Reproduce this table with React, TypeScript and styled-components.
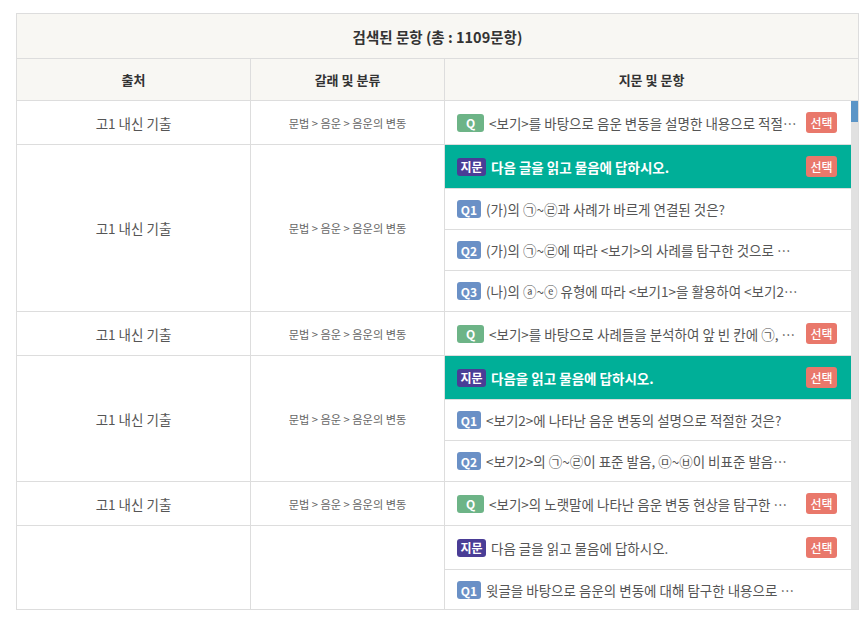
import styled, { createGlobalStyle } from 'styled-components';

type Kind = 'q' | 'sub' | 'passage';

interface Item {
    kind: Kind;
    label: string;
    text: string;
    pick?: boolean;
    active?: boolean;
}

interface Group {
    source: string;
    category: string;
    items: Item[];
}

const GlobalStyle = createGlobalStyle`
    html, body {
        margin: 0;
        background: #ffffff;
    }
    body {
        font-family: 'Noto Sans CJK KR', 'Noto Sans', sans-serif;
        color: #555555;
    }
`;

const Wrapper = styled.div`
    padding: 13px 9px 0 16px;
`;

const Board = styled.div`
    width: 843px;
    box-sizing: border-box;
    border: 1px solid #dddddd;
`;

const Title = styled.div`
    height: 44px;
    display: flex;
    align-items: center;
    justify-content: center;
    background: #f8f7f3;
    border-bottom: 1px solid #dddddd;
    font-size: 14.5px;
    font-weight: 700;
    color: #333333;
`;

const HeadRow = styled.div`
    display: grid;
    grid-template-columns: 234px 194px 1fr;
    height: 42px;
    background: #f8f7f3;
    border-bottom: 1px solid #dddddd;
    box-sizing: border-box;
`;

const HeadCell = styled.div`
    display: flex;
    align-items: center;
    justify-content: center;
    font-size: 13px;
    font-weight: 700;
    color: #333333;
    border-right: 1px solid #dddddd;
    &:last-child {
        border-right: none;
    }
`;

const Body = styled.div`
    display: flex;
    height: 508px;
`;

const Viewport = styled.div`
    flex: 1;
    min-width: 0;
    overflow: hidden;
`;

const ScrollTrack = styled.div`
    width: 7px;
    flex-shrink: 0;
    background: #e1e1e1;
`;

const ScrollThumb = styled.div`
    height: 21px;
    background: #5b95c7;
`;

const GroupRow = styled.div`
    display: grid;
    grid-template-columns: 234px 194px 1fr;
    border-bottom: 1px solid #dddddd;
`;

const SourceCell = styled.div`
    display: flex;
    align-items: center;
    justify-content: center;
    border-right: 1px solid #dddddd;
    font-size: 13.5px;
    color: #555555;
`;

const CategoryCell = styled(SourceCell)`
    font-size: 11.2px;
    color: #666666;
`;

const ItemList = styled.div`
    display: flex;
    flex-direction: column;
    min-width: 0;
`;

const ItemRow = styled.div<{ $active?: boolean; $pick?: boolean }>`
    display: grid;
    grid-template-columns: auto 1fr 31px;
    align-items: center;
    column-gap: 5px;
    height: ${(p) => (p.$pick ? '43px' : '40px')};
    padding: 0 14px 0 12px;
    background: ${(p) => (p.$active ? '#00af98' : '#ffffff')};
    border-bottom: 1px solid #dddddd;
    &:last-child {
        border-bottom: none;
    }
`;

const badgeColors: Record<Kind, string> = {
    q: '#6db487',
    sub: '#6a90c6',
    passage: '#4a3d96',
};

const badgeWidths: Record<Kind, string> = {
    q: '27px',
    sub: '24px',
    passage: '29px',
};

const Badge = styled.span<{ $kind: Kind }>`
    display: inline-flex;
    align-items: center;
    justify-content: center;
    width: ${(p) => badgeWidths[p.$kind]};
    height: 18px;
    border-radius: 3px;
    background: ${(p) => badgeColors[p.$kind]};
    color: #ffffff;
    font-size: 12px;
    font-weight: 700;
`;

const ItemText = styled.span<{ $active?: boolean }>`
    min-width: 0;
    margin-right: 3px;
    overflow: hidden;
    white-space: nowrap;
    text-overflow: ellipsis;
    font-size: 13.5px;
    font-weight: ${(p) => (p.$active ? 700 : 400)};
    color: ${(p) => (p.$active ? '#ffffff' : '#555555')};
`;

const PickButton = styled.button`
    width: 31px;
    height: 21px;
    padding: 0;
    border: none;
    border-radius: 3px;
    background: #e9786b;
    color: #ffffff;
    font-family: inherit;
    font-size: 12px;
    font-weight: 500;
    cursor: pointer;
`;

const source = '고1 내신 기출';
const category = '문법 > 음운 > 음운의 변동';

const groups: Group[] = [
    {
        source,
        category,
        items: [{ kind: 'q', label: 'Q', text: '<보기>를 바탕으로 음운 변동을 설명한 내용으로 적절하지 않은 것은?', pick: true }],
    },
    {
        source,
        category,
        items: [
            { kind: 'passage', label: '지문', text: '다음 글을 읽고 물음에 답하시오.', pick: true, active: true },
            { kind: 'sub', label: 'Q1', text: '(가)의 ㉠~㉣과 사례가 바르게 연결된 것은?' },
            { kind: 'sub', label: 'Q2', text: '(가)의 ㉠~㉣에 따라 <보기>의 사례를 탐구한 것으로 적절하지 않은 것은?' },
            { kind: 'sub', label: 'Q3', text: '(나)의 ⓐ~ⓔ 유형에 따라 <보기1>을 활용하여 <보기2>를 분석한 내용으로 적절한 것은?' },
        ],
    },
    {
        source,
        category,
        items: [{ kind: 'q', label: 'Q', text: '<보기>를 바탕으로 사례들을 분석하여 앞 빈 칸에 ㉠, ㉡을 채울 때 적절한 것은?', pick: true }],
    },
    {
        source,
        category,
        items: [
            { kind: 'passage', label: '지문', text: '다음을 읽고 물음에 답하시오.', pick: true, active: true },
            { kind: 'sub', label: 'Q1', text: '<보기2>에 나타난 음운 변동의 설명으로 적절한 것은?' },
            { kind: 'sub', label: 'Q2', text: '<보기2>의 ㉠~㉣이 표준 발음, ㉤~㉥이 비표준 발음인 이유를 설명한 것으로 적절한 것은?' },
        ],
    },
    {
        source,
        category,
        items: [{ kind: 'q', label: 'Q', text: '<보기>의 노랫말에 나타난 음운 변동 현상을 탐구한 내용으로 적절한 것은?', pick: true }],
    },
    {
        source,
        category,
        items: [
            { kind: 'passage', label: '지문', text: '다음 글을 읽고 물음에 답하시오.', pick: true },
            { kind: 'sub', label: 'Q1', text: '윗글을 바탕으로 음운의 변동에 대해 탐구한 내용으로 적절하지 않은 것은?' },
            { kind: 'sub', label: 'Q2', text: '윗글을 참고할 때, <보기>의 ㉠~㉤에 대한 설명으로 적절한 것은?' },
            { kind: 'sub', label: 'Q3', text: '<보기>의 자료를 분석한 내용으로 가장 적절한 것은?' },
            { kind: 'sub', label: 'Q4', text: '다음 중 음운 변동의 결과 음운의 개수가 줄어든 것은?' },
        ],
    },
];

const App = () => (
    <Wrapper>
        <GlobalStyle />
        <Board>
            <Title>검색된 문항 (총 : 1109문항)</Title>
            <HeadRow>
                <HeadCell>출처</HeadCell>
                <HeadCell>갈래 및 분류</HeadCell>
                <HeadCell>지문 및 문항</HeadCell>
            </HeadRow>
            <Body>
                <Viewport>
                    {groups.map((group, gi) => (
                        <GroupRow key={gi}>
                            <SourceCell>{group.source}</SourceCell>
                            <CategoryCell>{group.category}</CategoryCell>
                            <ItemList>
                                {group.items.map((item, ii) => (
                                    <ItemRow key={ii} $active={item.active} $pick={item.pick}>
                                        <Badge $kind={item.kind}>{item.label}</Badge>
                                        <ItemText $active={item.active}>{item.text}</ItemText>
                                        {item.pick ? <PickButton>선택</PickButton> : <span />}
                                    </ItemRow>
                                ))}
                            </ItemList>
                        </GroupRow>
                    ))}
                </Viewport>
                <ScrollTrack>
                    <ScrollThumb />
                </ScrollTrack>
            </Body>
        </Board>
    </Wrapper>
);

export default App;
